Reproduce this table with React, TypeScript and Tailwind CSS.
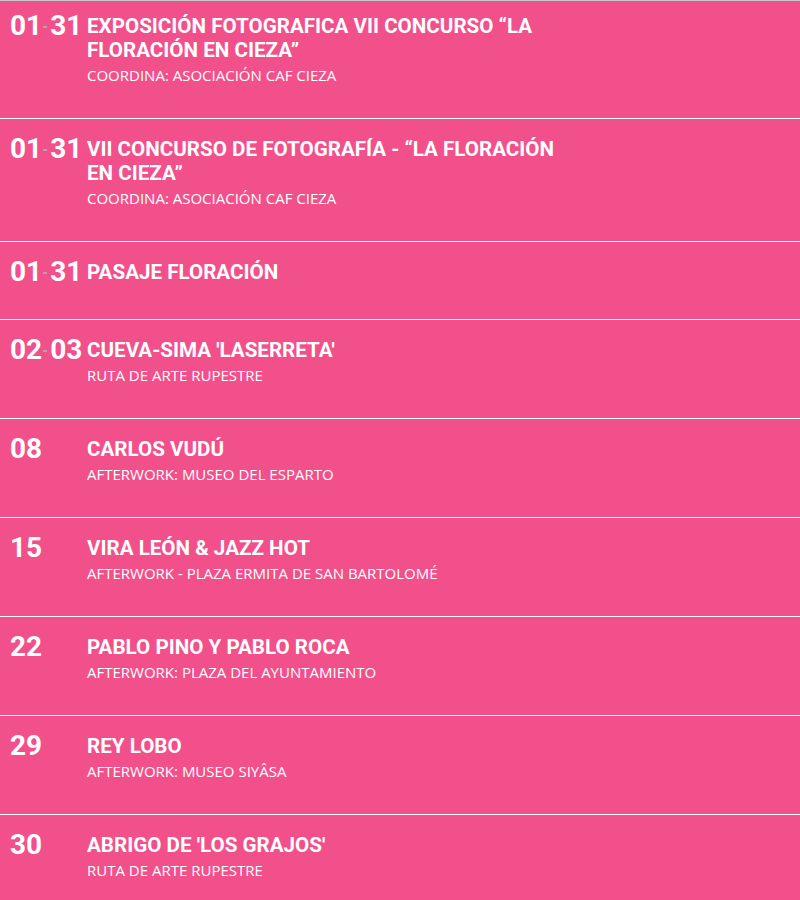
// Agenda de eventos — lista rosa con fechas y títulos
type Evento = {
  desde: string
  hasta?: string
  titulo: string
  sub?: string
}

const eventos: Evento[] = [
  {
    desde: '01',
    hasta: '31',
    titulo: 'Exposición fotografica VII concurso “La floración en Cieza”',
    sub: 'Coordina: Asociación CAF Cieza',
  },
  {
    desde: '01',
    hasta: '31',
    titulo: 'VII Concurso de Fotografía - “La Floración en Cieza”',
    sub: 'Coordina: Asociación CAF Cieza',
  },
  { desde: '01', hasta: '31', titulo: 'Pasaje Floración' },
  { desde: '02', hasta: '03', titulo: "Cueva-Sima 'LaSerreta'", sub: 'Ruta de arte rupestre' },
  { desde: '08', titulo: 'Carlos Vudú', sub: 'Afterwork: Museo del Esparto' },
  { desde: '15', titulo: 'Vira León & Jazz Hot', sub: 'Afterwork - Plaza Ermita de San Bartolomé' },
  { desde: '22', titulo: 'Pablo Pino y Pablo Roca', sub: 'Afterwork: Plaza del Ayuntamiento' },
  { desde: '29', titulo: 'Rey Lobo', sub: 'Afterwork: Museo Siyâsa' },
  { desde: '30', titulo: "Abrigo de 'Los Grajos'", sub: 'Ruta de arte rupestre' },
]

export default function App() {
  return (
    <div className="min-h-[900px] w-[800px] overflow-hidden bg-[#f2508a] border-t border-[#c9c9c9] font-['Roboto',sans-serif] text-white">
      {eventos.map((ev, i) => (
        <div
          key={i}
          className={`flex border-b border-white pl-[10px] ${i === 0 ? 'pt-[13px]' : 'pt-[18px]'} ${ev.sub ? 'pb-[33px]' : 'pb-[35px]'}`}
        >
          {/* ---- fecha ---- */}
          <div className="flex w-[77px] shrink-0 items-center self-start h-[24px] text-[28px] font-bold leading-none">
            <span>{ev.desde}</span>
            {ev.hasta && (
              <>
                <span className="ml-[1px] mr-[3px] mt-[2px] inline-block h-[2px] w-[4px] bg-[#a8a8a8]" />
                <span>{ev.hasta}</span>
              </>
            )}
          </div>

          {/* ---- título ---- */}
          <div className="w-[490px]">
            <h3 className="text-[20.6px] font-bold uppercase leading-[24px]">{ev.titulo}</h3>
            {ev.sub && (
              <p className="mt-[3px] font-['Open_Sans',sans-serif] text-[15px] uppercase leading-[20px]">
                {ev.sub}
              </p>
            )}
          </div>
        </div>
      ))}
    </div>
  )
}
